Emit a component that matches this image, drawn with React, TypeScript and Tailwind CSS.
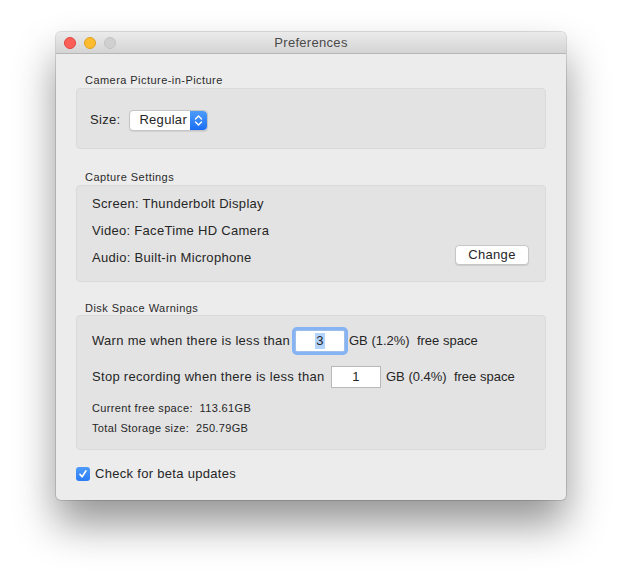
import React from "react";

function Stepper() {
  return (
    <div className="w-[17px] h-full rounded-r-[4px] bg-gradient-to-b from-[#4d9bfb] to-[#1a6ef4] flex items-center justify-center">
      <svg width="9" height="13" viewBox="0 0 9 13" fill="none">
        <path d="M1.5 5 L4.5 2 L7.5 5" stroke="white" strokeWidth="1.4" strokeLinecap="round" strokeLinejoin="round" />
        <path d="M1.5 8 L4.5 11 L7.5 8" stroke="white" strokeWidth="1.4" strokeLinecap="round" strokeLinejoin="round" />
      </svg>
    </div>
  );
}

export default function App() {
  return (
    <div
      className="w-[622px] h-[581px] bg-white pt-[32px] pl-[56px] text-[#262626] tracking-[0.3px]"
      style={{ fontFamily: '"Liberation Sans", Arial, sans-serif' }}
    >
      <div className="w-[510px] h-[468px] rounded-[5px] bg-[#ececec] shadow-[0_0_0_1px_rgba(0,0,0,0.13),0_24px_42px_rgba(0,0,0,0.42)] overflow-hidden flex flex-col">
        {/* Title bar */}
        <div className="h-[22px] shrink-0 grid grid-cols-[1fr_auto_1fr] items-center bg-gradient-to-b from-[#ebebeb] to-[#d4d4d4] border-b border-[#b6b6b6]">
          <div className="flex items-center gap-[8px] pl-[8px]">
            <span className="w-[12px] h-[12px] rounded-full bg-[#fc5f57] border border-[#e0443e]" />
            <span className="w-[12px] h-[12px] rounded-full bg-[#fdbc2e] border border-[#dea123]" />
            <span className="w-[12px] h-[12px] rounded-full bg-[#d0d0d0] border border-[#c2c2c2]" />
          </div>
          <div className="text-[13px] leading-[16px] text-[#4a4a4a]">Preferences</div>
          <div />
        </div>

        {/* Body */}
        <div className="px-[20px] flex flex-col">
          {/* Group 1 */}
          <div className="mt-[19px] mb-[1px] pl-[9px] text-[11px] leading-[14px] tracking-[0.45px] text-[#2b2b2b]">
            Camera Picture-in-Picture
          </div>
          <div className="h-[61px] rounded-[4px] bg-[#e3e3e3] border border-[#dadada] flex items-center pl-[13px] pt-[3px] gap-[9px]">
            <span className="text-[13px] leading-[16px]">Size:</span>
            <div className="h-[21px] w-[79px] flex rounded-[4px] bg-white border border-[#c4c4c4] shadow-[0_1px_1px_rgba(0,0,0,0.08)]">
              <div className="flex-1 flex items-center pl-[9px] text-[13px] leading-[16px]">Regular</div>
              <Stepper />
            </div>
          </div>

          {/* Group 2 */}
          <div className="mt-[21px] mb-[1px] pl-[9px] text-[11px] leading-[14px] tracking-[0.45px] text-[#2b2b2b]">
            Capture Settings
          </div>
          <div className="h-[97px] rounded-[4px] bg-[#e3e3e3] border border-[#dadada] flex flex-col pl-[15px] pr-[16px] pt-[10px] gap-[11px] text-[13px] leading-[16px]">
            <div>Screen: Thunderbolt Display</div>
            <div>Video: FaceTime HD Camera</div>
            <div className="flex items-center justify-between">
              <span>Audio: Built-in Microphone</span>
              <button className="-mt-[6px] h-[20px] w-[74px] rounded-[4px] bg-white border border-[#c6c6c6] shadow-[0_1px_1px_rgba(0,0,0,0.1)] text-[13px] leading-[16px] tracking-[0.3px] text-[#262626]">
                Change
              </button>
            </div>
          </div>

          {/* Group 3 */}
          <div className="mt-[19px] mb-[0px] pl-[9px] text-[11px] leading-[14px] tracking-[0.45px] text-[#2b2b2b]">
            Disk Space Warnings
          </div>
          <div className="h-[135px] rounded-[4px] bg-[#e3e3e3] border border-[#dadada] flex flex-col pl-[15px] pt-[14px] text-[13px] leading-[16px]">
            <div className="h-[22px] flex items-center">
              <span className="w-[203px] whitespace-nowrap">Warn me when there is less than</span>
              <div className="h-[22px] w-[50px] bg-white border border-[#9fbfe9] rounded-[2px] ring-[3px] ring-[#86b3f3] flex items-center justify-center">
                <span className="bg-[#b3d4fd] px-[1px] leading-[16px]">3</span>
              </div>
              <span className="ml-[4px] whitespace-pre tracking-normal">GB (1.2%)  free space</span>
            </div>
            <div className="mt-[14px] h-[22px] flex items-center">
              <span className="w-[239px] whitespace-nowrap">Stop recording when there is less than</span>
              <div className="h-[22px] w-[50px] bg-white border border-[#b9b9b9] flex items-center justify-center">
                1
              </div>
              <span className="ml-[5px] whitespace-pre tracking-normal">GB (0.4%)  free space</span>
            </div>
            <div className="mt-[13px] text-[11px] leading-[14px] tracking-[0.35px] whitespace-pre">Current free space:  113.61GB</div>
            <div className="mt-[6px] text-[11px] leading-[14px] tracking-[0.35px] whitespace-pre">Total Storage size:  250.79GB</div>
          </div>

          {/* Checkbox */}
          <div className="mt-[16px] flex items-center gap-[5px]">
            <span className="w-[14px] h-[14px] rounded-[3px] bg-gradient-to-b from-[#4d9bfb] to-[#2a7cf6] flex items-center justify-center">
              <svg width="10" height="10" viewBox="0 0 10 10" fill="none">
                <path d="M2 5.4 L4.1 7.8 L8 1.8" stroke="white" strokeWidth="1.6" strokeLinecap="round" strokeLinejoin="round" />
              </svg>
            </span>
            <span className="text-[13px] leading-[16px]">Check for beta updates</span>
          </div>
        </div>
      </div>
    </div>
  );
}
